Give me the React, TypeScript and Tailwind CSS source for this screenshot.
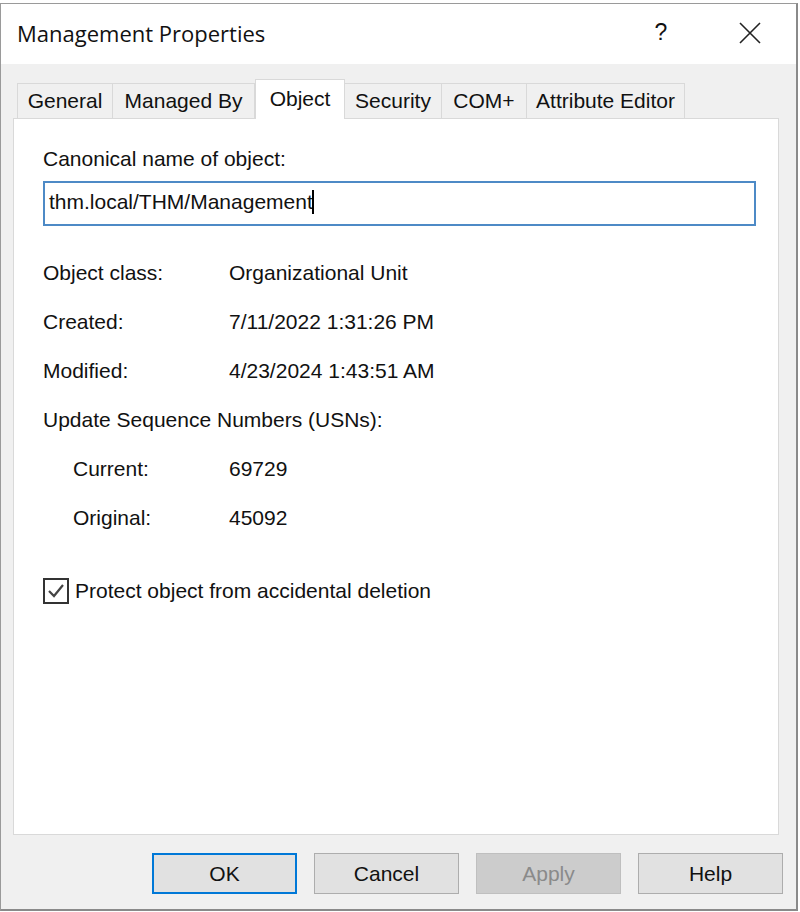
import React from 'react';

const tabs = [
  { label: 'General', w: 'w-[96px]' },
  { label: 'Managed By', w: 'w-[142px]' },
  { label: 'Object', w: 'w-[90px]', active: true },
  { label: 'Security', w: 'w-[97px]' },
  { label: 'COM+', w: 'w-[85px]' },
  { label: 'Attribute Editor', w: 'w-[158px]' },
];

function InfoRow({ label, value, indent }: { label: string; value?: string; indent?: boolean }) {
  return (
    <div className="flex h-[49px] items-center whitespace-nowrap">
      <div className={indent ? 'w-[186px] shrink-0 pl-[30px]' : 'w-[186px] shrink-0'}>{label}</div>
      {value && <div>{value}</div>}
    </div>
  );
}

export default function App() {
  return (
    <div
      className="w-[800px] h-[912px] bg-white pt-[3px] text-[21px] leading-[24px] text-[#111]"
      style={{ fontFamily: '"Liberation Sans", Arial, sans-serif' }}
    >
      <div className="w-[798px] h-[908px] flex flex-col border-t border-l border-[#9a9a9a] border-r-2 border-b-2 border-r-[#8a8a8a] border-b-[#8a8a8a] bg-[#f0f0f0]">
        {/* Title bar */}
        <div className="h-[60px] bg-white flex items-center shrink-0">
          <div className="pl-[16px] flex-1 text-[22px] pb-[2px]" style={{ fontFamily: '"Open Sans", sans-serif' }}>
            Management Properties
          </div>
          <div className="w-[40px] text-center text-[23px] mr-[58px] pb-[4px]">?</div>
          <svg width="22" height="22" viewBox="0 0 22 22" className="mr-[35px] mb-[2px]">
            <path d="M1 1 L21 21 M21 1 L1 21" stroke="#222" strokeWidth="1.6" fill="none" />
          </svg>
        </div>

        {/* Tabs */}
        <div className="flex items-end h-[54px] pl-[16px] shrink-0">
          {tabs.map((t) =>
            t.active ? (
              <div
                key={t.label}
                className={`${t.w} h-[40px] mb-[-1px] relative z-10 bg-white border border-b-0 border-[#d9d9d9] flex items-center justify-center pb-[2px]`}
              >
                {t.label}
              </div>
            ) : (
              <div
                key={t.label}
                className={`${t.w} h-[35px] border border-b-0 border-l-0 first:border-l border-[#d9d9d9] flex items-center justify-center`}
              >
                {t.label}
              </div>
            )
          )}
        </div>

        {/* Panel */}
        <div className="mx-[12px] mr-[17px] h-[717px] bg-white border border-[#d9d9d9] pt-[28px] pl-[29px] pr-[22px]">
          <div>Canonical name of object:</div>
          <div className="mt-[10px] h-[45px] border-2 border-[#4d8ac6] flex items-center pl-[4px] pb-[4px]">
            <span>thm.local/THM/Management</span>
            <span className="inline-block w-[2px] h-[24px] bg-black ml-[-1px]" />
          </div>
          <div className="mt-[22px]">
            <InfoRow label="Object class:" value="Organizational Unit" />
            <InfoRow label="Created:" value="7/11/2022 1:31:26 PM" />
            <InfoRow label="Modified:" value="4/23/2024 1:43:51 AM" />
            <InfoRow label="Update Sequence Numbers (USNs):" />
            <InfoRow label="Current:" value="69729" indent />
            <InfoRow label="Original:" value="45092" indent />
          </div>
          <div className="mt-[24px] h-[49px] flex items-center">
            <div className="w-[26px] h-[26px] border-2 border-[#333] flex items-center justify-center">
              <svg width="20" height="20" viewBox="0 0 20 20">
                <path d="M3 10 L8 15 L17 4" stroke="#444" strokeWidth="2.2" fill="none" />
              </svg>
            </div>
            <div className="ml-[6px]">Protect object from accidental deletion</div>
          </div>
        </div>

        {/* Buttons */}
        <div className="flex justify-end gap-[17px] pr-[13px] mt-[18px]">
          <button className="w-[145px] h-[41px] bg-[#e1e1e1] border-2 border-[#0078d7] text-[21px]">OK</button>
          <button className="w-[145px] h-[41px] bg-[#e1e1e1] border border-[#adadad] text-[21px]">Cancel</button>
          <button className="w-[145px] h-[41px] bg-[#cccccc] border border-[#bfbfbf] text-[21px] text-[#8a8a8a]">Apply</button>
          <button className="w-[145px] h-[41px] bg-[#e1e1e1] border border-[#adadad] text-[21px]">Help</button>
        </div>
      </div>
    </div>
  );
}
